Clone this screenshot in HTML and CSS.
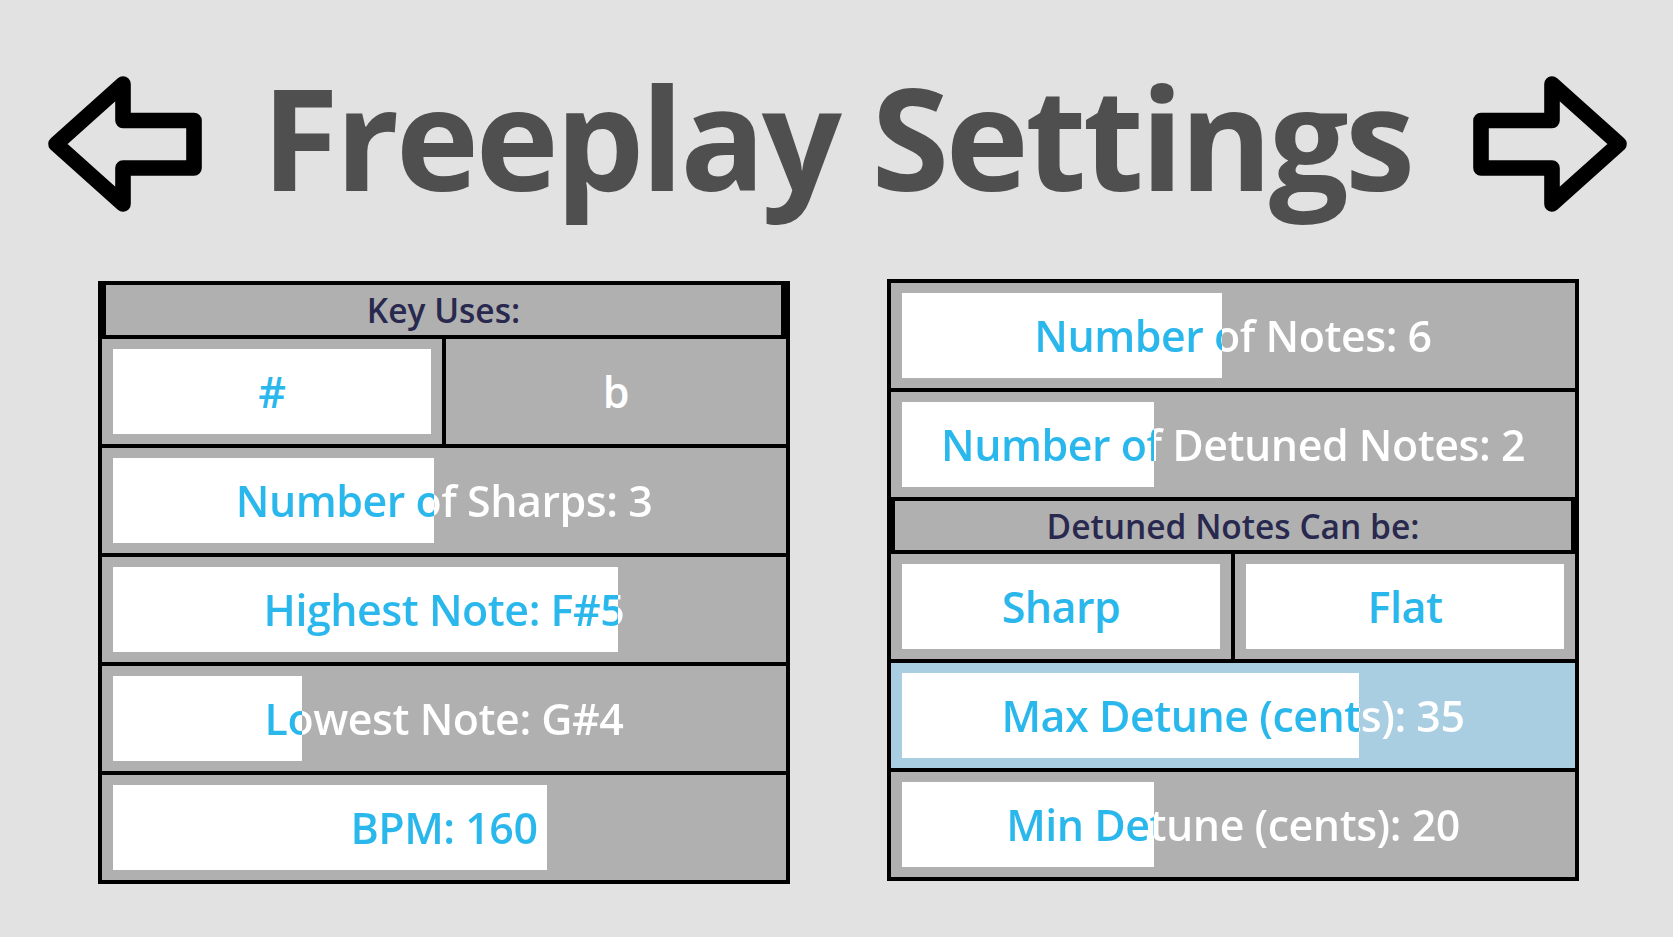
FILE: index.html
```html
<!DOCTYPE html>
<html lang="en">
<head>
<meta charset="utf-8">
<title>Freeplay Settings</title>
<link rel="stylesheet" href="styles.css">
</head>
<body>
<header class="top">
  <svg class="arrow" width="170" height="150" viewBox="0 0 170 150" aria-hidden="true">
    <path d="M83 51.5 L83 15 L16 75 L83 135 L83 99 L154 99 L154 51.5 Z"/>
  </svg>
  <h1 class="title">Freeplay Settings</h1>
  <svg class="arrow" width="170" height="150" viewBox="0 0 170 150" aria-hidden="true">
    <path d="M89 51.5 L89 15 L156 75 L89 135 L89 99 L18 99 L18 51.5 Z"/>
  </svg>
</header>

<main class="panels">
  <section class="panel panel-left">
    <div class="panel-head head-left">Key Uses:</div>
    <div class="row split">
      <div class="cell"><div class="opt on">#</div></div>
      <div class="cell"><div class="opt">b</div></div>
    </div>
    <div class="row"><div class="track" style="--p:48.5%"><span class="label">Number of Sharps: 3</span></div></div>
    <div class="row"><div class="track" style="--p:76.3%"><span class="label">Highest Note: F#5</span></div></div>
    <div class="row"><div class="track" style="--p:28.5%"><span class="label">Lowest Note: G#4</span></div></div>
    <div class="row"><div class="track" style="--p:65.6%"><span class="label">BPM: 160</span></div></div>
  </section>

  <section class="panel panel-right">
    <div class="row"><div class="track" style="--p:48.3%"><span class="label">Number of Notes: 6</span></div></div>
    <div class="row"><div class="track" style="--p:38.1%"><span class="label">Number of Detuned Notes: 2</span></div></div>
    <div class="panel-head head-right">Detuned Notes Can be:</div>
    <div class="row split">
      <div class="cell"><div class="opt on">Sharp</div></div>
      <div class="cell"><div class="opt on">Flat</div></div>
    </div>
    <div class="row active"><div class="track" style="--p:69%"><span class="label">Max Detune (cents): 35</span></div></div>
    <div class="row"><div class="track" style="--p:38.1%"><span class="label">Min Detune (cents): 20</span></div></div>
  </section>
</main>
</body>
</html>
```
FILE: styles.css
```css
* {
  box-sizing: border-box;
}

html, body {
  margin: 0;
  padding: 0;
}

body {
  background: #e2e2e2;
  font-family: "Open Sans", "Noto Sans", sans-serif;
  width: 1673px;
  height: 937px;
  overflow: hidden;
}

.top {
  height: 279px;
  display: flex;
  align-items: flex-start;
  padding: 69px 40px 0 40px;
}

.arrow {
  flex: none;
  display: block;
}

.arrow path {
  fill: none;
  stroke: #000;
  stroke-width: 15.6;
  stroke-linejoin: round;
}

.title {
  flex: 1;
  margin: -3px 0 0 0;
  text-align: center;
  font-size: 141px;
  line-height: 1;
  font-weight: 700;
  color: #4f4f4f;
  letter-spacing: -3.6px;
  white-space: nowrap;
}

.panels {
  display: flex;
  align-items: flex-start;
  gap: 97px;
  padding-left: 98px;
}

.panel {
  width: 692px;
  border: 4px solid #000;
  background: #000;
  display: flex;
  flex-direction: column;
  gap: 4px;
}

.panel-left {
  margin-top: 2px;
}

.panel-head {
  height: 49px;
  background: #b0b0b0;
  display: flex;
  align-items: center;
  justify-content: center;
  font-size: 33.5px;
  font-weight: 600;
  letter-spacing: 0;
  color: #29294f;
}

.head-left {
  height: 50px;
  border-left: 4px solid #000;
  border-right: 5px solid #000;
}

.head-right {
  border-left: 4px solid #000;
  border-right: 4px solid #000;
}

.row {
  height: 105px;
  background: #b0b0b0;
  padding: 10px 11px;
  display: flex;
}

.row.active {
  background: #a9cee1;
}

.row.split {
  padding: 0;
  gap: 4px;
  background: #000;
}

.cell {
  flex: 1;
  background: #b0b0b0;
  padding: 10px 11px;
}

.opt {
  height: 100%;
  display: flex;
  align-items: center;
  justify-content: center;
  font-size: 43px;
  font-weight: 600;
  letter-spacing: -0.5px;
  color: #fff;
}

.opt.on {
  background: #fff;
  color: #2ab7ec;
}

.track {
  flex: 1;
  display: flex;
  align-items: center;
  background: linear-gradient(to right, #fff var(--p), transparent var(--p));
}

.label {
  width: 100%;
  text-align: center;
  font-size: 43px;
  font-weight: 600;
  letter-spacing: -0.5px;
  white-space: nowrap;
  background: linear-gradient(to right, #2ab7ec var(--p), #fff var(--p));
  -webkit-background-clip: text;
  background-clip: text;
  color: transparent;
}
```
